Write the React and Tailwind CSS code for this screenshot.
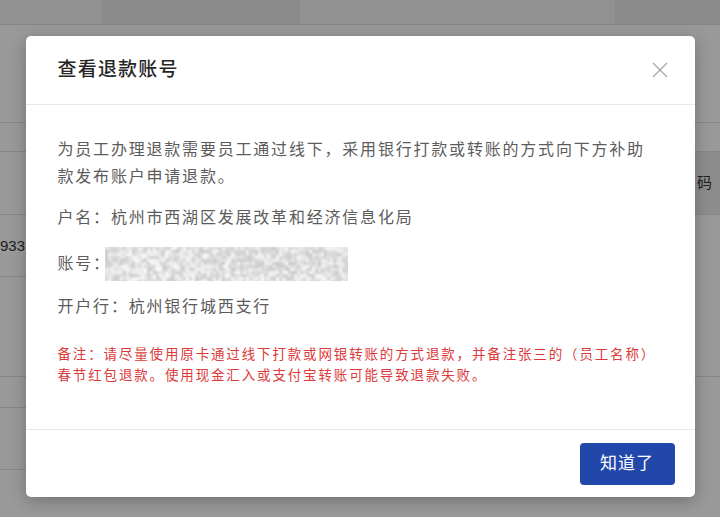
import React from 'react';

// deterministic noise for the masked account number
const noise = (() => {
    let s = 7;
    const rnd = () => {
        s = (s * 9301 + 49297) % 233280;
        return s / 233280;
    };
    const cells = [];
    for (let y = 0; y < 34; y += 3) {
        for (let x = 0; x < 243; x += 3) {
            const v = Math.round(200 + rnd() * 50);
            cells.push({ x, y, c: `rgb(${v},${v},${v})` });
        }
    }
    return cells;
})();

const MaskedNumber = () => (
    <svg width="243" height="34" viewBox="0 0 243 34" className="block">
        <defs>
            <filter id="blur" x="0" y="0" width="100%" height="100%">
                <feGaussianBlur stdDeviation="0.9" />
            </filter>
        </defs>
        <rect width="243" height="34" fill="#e6e6e6" />
        <g filter="url(#blur)">
            {noise.map((n, i) => (
                <rect key={i} x={n.x} y={n.y} width="3" height="3" fill={n.c} />
            ))}
        </g>
    </svg>
);

const Background = () => (
    <div className="flex flex-col w-full h-[517px] bg-white">
        {/* table header strip */}
        <div className="grid grid-cols-[102px_198px_315px_1fr] h-[25px] border-b border-[#dcdcdc]">
            <div className="bg-[#f2f2f2]" />
            <div className="bg-[#e6e6e6]" />
            <div className="bg-[#f2f2f2]" />
            <div className="bg-[#e6e6e6]" />
        </div>
        <div className="flex flex-1">
            {/* left edge rows */}
            <div className="flex flex-col w-[360px]">
                <div className="h-[98px] border-b border-[#e2e2e2]" />
                <div className="h-[29px] border-b border-[#e2e2e2]" />
                <div className="h-[63px] border-b border-[#e2e2e2]" />
                <div className="h-[62px] border-b border-[#e2e2e2] flex items-center">
                    <span className="text-[15px] text-[#333] leading-none">933</span>
                </div>
                <div className="h-[100px] border-b border-[#e2e2e2]" />
                <div className="h-[31px] border-b border-[#e2e2e2]" />
                <div className="h-[62px] border-b border-[#e2e2e2]" />
            </div>
            {/* right edge rows */}
            <div className="flex flex-col flex-1">
                <div className="h-[98px] border-b border-[#e2e2e2]" />
                <div className="h-[29px] border-b border-[#e2e2e2]" />
                <div className="h-[63px] border-b border-[#e2e2e2] bg-[#ececec] flex items-center pl-[337px]">
                    <span className="text-[15px] text-[#333]">码</span>
                </div>
                <div className="h-[162px] border-b border-[#e2e2e2]" />
            </div>
        </div>
    </div>
);

const App = () => {
    return (
        <div className="relative w-[720px] h-[517px] overflow-hidden font-['Liberation_Sans','Noto_Sans_CJK_SC',sans-serif]">
            <Background />

            {/* mask */}
            <div className="absolute inset-0 bg-black/40" />

            {/* dialog */}
            <div className="absolute inset-0 flex justify-center pt-[36px]">
                <div className="w-[669px] h-[461px] bg-white rounded-[5px] shadow-[0_4px_16px_rgba(0,0,0,0.25)] flex flex-col">
                    <div className="h-[69px] flex items-center justify-between pl-[32px] pr-[27px] border-b border-[#e8e8e8]">
                        <h2 className="text-[19px] font-medium tracking-[1.2px] text-[#262626]">查看退款账号</h2>
                        <button className="w-[16px] h-[16px] text-[#a6a6a6]">
                            <svg width="16" height="16" viewBox="0 0 16 16" fill="none" stroke="currentColor" strokeWidth="1.3">
                                <path d="M1 1 L15 15 M15 1 L1 15" />
                            </svg>
                        </button>
                    </div>

                    <div className="flex-1 px-[32px] pt-[31px] text-[16px] tracking-[1.8px] text-[#5c5c5c]">
                        <p className="leading-[27px]">
                            为员工办理退款需要员工通过线下，采用银行打款或转账的方式向下方补助款发布账户申请退款。
                        </p>
                        <p className="leading-[27px] mt-[14px]">户名：杭州市西湖区发展改革和经济信息化局</p>
                        <div className="flex items-center mt-[16px] h-[34px]">
                            <span>账号：</span>
                            <div className="-ml-[6px]">
                                <MaskedNumber />
                            </div>
                        </div>
                        <p className="leading-[27px] mt-[12px]">开户行：杭州银行城西支行</p>
                        <p className="mt-[24px] text-[13.5px] leading-[21px] tracking-[1.85px] text-[#dc3a3a]">
                            备注：请尽量使用原卡通过线下打款或网银转账的方式退款，并备注张三的（员工名称）春节红包退款。使用现金汇入或支付宝转账可能导致退款失败。
                        </p>
                    </div>

                    <div className="h-[68px] border-t border-[#e8e8e8] flex items-center justify-end pr-[20px]">
                        <button className="w-[95px] h-[42px] rounded-[4px] bg-[#2247ab] text-white text-[17px] tracking-[1px]">
                            知道了
                        </button>
                    </div>
                </div>
            </div>
        </div>
    );
};

export default App;
